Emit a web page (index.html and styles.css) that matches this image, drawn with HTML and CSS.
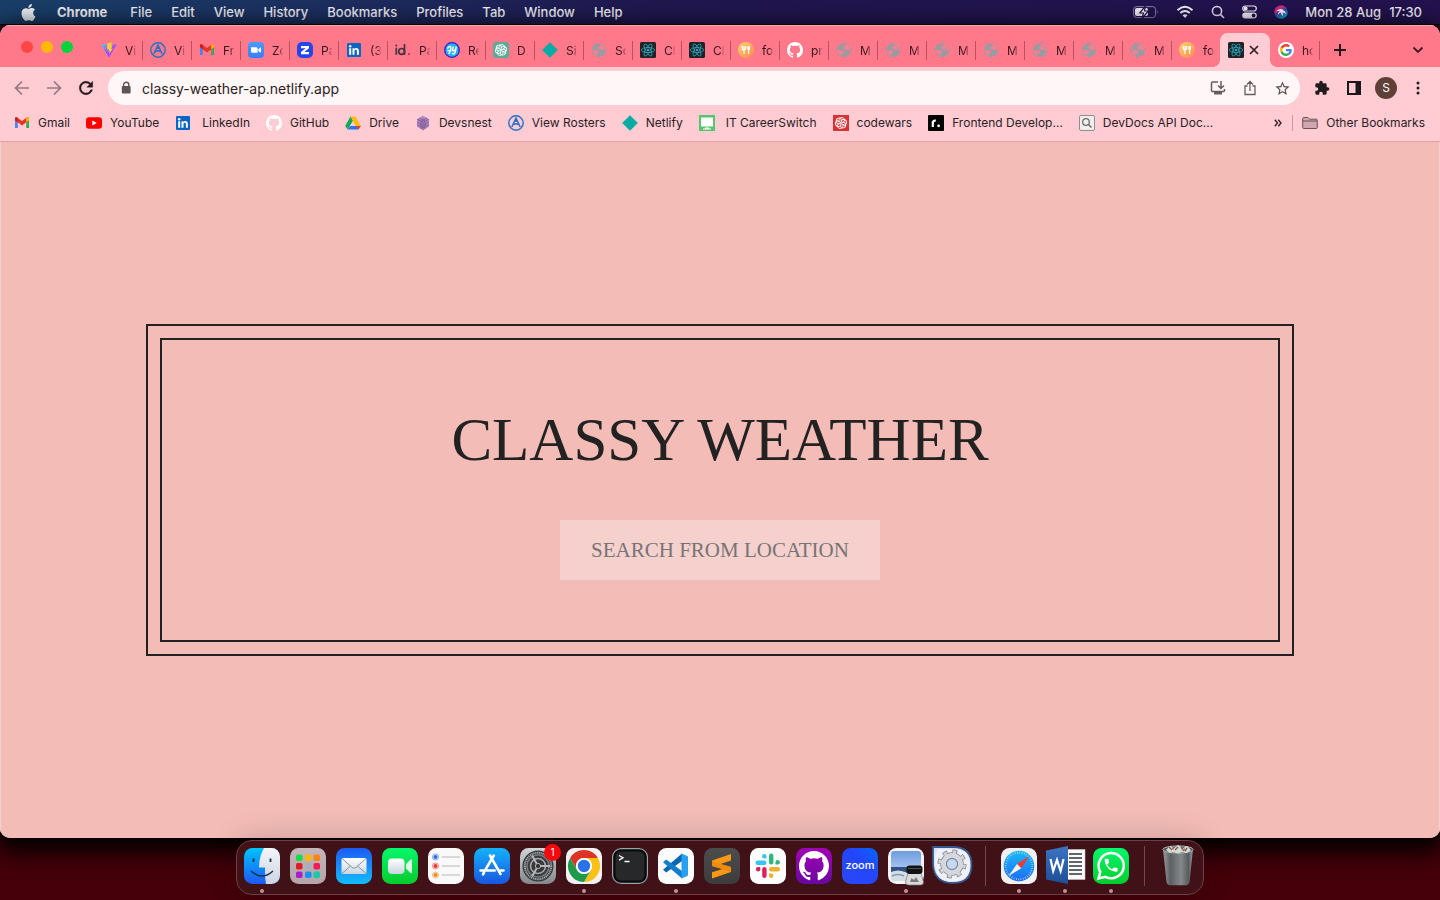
FILE: index.html
```html
<!DOCTYPE html>
<html lang="en">
<head>
<meta charset="utf-8">
<meta name="viewport" content="width=device-width, initial-scale=1">
<title>Classy Weather</title>
<link rel="stylesheet" href="styles.css">
</head>
<body>
<svg class="sprite" aria-hidden="true">
  <defs>
    <linearGradient id="g-vite" x1="0" y1="0" x2="1" y2="1"><stop offset="0" stop-color="#41d1ff"/><stop offset=".5" stop-color="#9a50ff"/><stop offset="1" stop-color="#bd34fe"/></linearGradient>
    <linearGradient id="g-food" x1="0" y1="0" x2="1" y2="1"><stop offset="0" stop-color="#fbd66a"/><stop offset="1" stop-color="#ff8652"/></linearGradient>
    <linearGradient id="g-zoomtab" x1="0" y1="0" x2="0" y2="1"><stop offset="0" stop-color="#4a9bff"/><stop offset="1" stop-color="#3a7dff"/></linearGradient>
    <linearGradient id="g-finder" x1="0" y1="0" x2="0" y2="1"><stop offset="0" stop-color="#00c3ff"/><stop offset="1" stop-color="#1e58f5"/></linearGradient>
    <linearGradient id="g-face" x1="0" y1="0" x2="0" y2="1"><stop offset="0" stop-color="#f5f5f8"/><stop offset="1" stop-color="#cbd5e2"/></linearGradient>
    <linearGradient id="g-pad" x1="0" y1="0" x2="0" y2="1"><stop offset="0" stop-color="#c3b5b9"/><stop offset="1" stop-color="#b5a5a9"/></linearGradient>
    <linearGradient id="g-mail" x1="0" y1="0" x2="0" y2="1"><stop offset="0" stop-color="#1e5bf2"/><stop offset="1" stop-color="#12bdfd"/></linearGradient>
    <linearGradient id="g-env" x1="0" y1="0" x2="0" y2="1"><stop offset="0" stop-color="#fff"/><stop offset="1" stop-color="#c9d4df"/></linearGradient>
    <linearGradient id="g-green" x1="0" y1="0" x2="0" y2="1"><stop offset="0" stop-color="#04f76c"/><stop offset="1" stop-color="#06cc2c"/></linearGradient>
    <linearGradient id="g-store" x1="0" y1="0" x2="0" y2="1"><stop offset="0" stop-color="#13b2fa"/><stop offset="1" stop-color="#1a56e0"/></linearGradient>
    <linearGradient id="g-sys" x1="0" y1="0" x2="0" y2="1"><stop offset="0" stop-color="#d2d5d8"/><stop offset="1" stop-color="#84878a"/></linearGradient>
    <linearGradient id="g-subl" x1="0" y1="0" x2="0" y2="1"><stop offset="0" stop-color="#4d4d4d"/><stop offset="1" stop-color="#3c3c3c"/></linearGradient>
    <linearGradient id="g-git" x1="0" y1="0" x2="0" y2="1"><stop offset="0" stop-color="#a104b5"/><stop offset="1" stop-color="#6a07a0"/></linearGradient>
    <linearGradient id="g-zoom" x1="1" y1="0" x2="0" y2="1"><stop offset="0" stop-color="#0568fa"/><stop offset=".4" stop-color="#2346fb"/><stop offset="1" stop-color="#2a48f5"/></linearGradient>
    <linearGradient id="g-sky" x1="0" y1="0" x2="0" y2="1"><stop offset="0" stop-color="#6f9be0"/><stop offset="1" stop-color="#b2cdf3"/></linearGradient>
    <linearGradient id="g-saf" x1="0" y1="0" x2="0" y2="1"><stop offset="0" stop-color="#1cb9fb"/><stop offset="1" stop-color="#1b6cf0"/></linearGradient>
    <linearGradient id="g-word" x1="0" y1="0" x2="0" y2="1"><stop offset="0" stop-color="#3c74c2"/><stop offset="1" stop-color="#1e4d97"/></linearGradient>
    <linearGradient id="g-trash" x1="0" y1="0" x2="1" y2="0"><stop offset="0" stop-color="#9a9d9f"/><stop offset=".25" stop-color="#5c6062"/><stop offset=".6" stop-color="#85898b"/><stop offset=".85" stop-color="#595c5e"/><stop offset="1" stop-color="#9c9fa1"/></linearGradient>
    <linearGradient id="g-siri" x1="0" y1="0" x2=".6" y2="1"><stop offset="0" stop-color="#a01c8c"/><stop offset=".35" stop-color="#d8287e"/><stop offset=".6" stop-color="#2b48a8"/><stop offset="1" stop-color="#12a5c8"/></linearGradient>
    <clipPath id="c-app"><rect width="36" height="36" rx="8.5"/></clipPath>
  </defs>
  <symbol id="vite" viewBox="0 0 16 16"><path d="M.2 2 8 15.800 15.800 2 8.400 3.400Z" fill="url(#g-vite)"/><path d="M11.300.2 6.400 1.200 6 7.400l2-.4-.6 2.800 1.600-.5-1.200 3.500 4-6.300-1.900.3 1.900-3.500-1.900.3Z" fill="#ffd02a"/></symbol>
  <symbol id="roster" viewBox="0 0 16 16"><circle cx="8" cy="8" r="7.200" fill="none" stroke="#2870c6" stroke-width="1.400"/><path d="M3.800 12 8 3l4.200 9M5.600 9.800c1.600-1.400 3.300-1.400 4.900 0M8 3v4" fill="none" stroke="#2870c6" stroke-width="1.500"/></symbol>
  <symbol id="gmail" viewBox="0 0 16 16"><path d="M1 3v10h2.800V6Z" fill="#4285f4"/><path d="M12.200 6v7H15V3Z" fill="#34a853"/><path d="M1 3.800C1 2.200 2.600 2 3.600 2.700L8 6l4.400-3.300C13.400 2 15 2.200 15 3.800v1.400L8 10.500 1 5.200Z" fill="#ea3325"/><path d="M1 3.800v1.400l2.800 2.100V2.900C2.600 2 1 2.200 1 3.800Z" fill="#c5221f"/><path d="M15 3.800v1.400l-2.800 2.100V2.900C13.400 2 15 2.200 15 3.800Z" fill="#fbbc04"/></symbol>
  <symbol id="zoomtab" viewBox="0 0 16 16"><rect width="16" height="16" rx="4" fill="url(#g-zoomtab)"/><path d="M3 5.300h5.200q1.500 0 1.500 1.500v4H4.500Q3 10.800 3 9.300ZM10.300 7.200 13 5.300v5.500L10.300 9Z" fill="#fff"/></symbol>
  <symbol id="zdoc" viewBox="0 0 16 16"><rect width="16" height="16" rx="5" fill="#2445ea"/><path d="M4 4h8v2.200L7.300 10H12v2.200H4V10l4.700-3.800H4Z" fill="#fff"/></symbol>
  <symbol id="linkedin" viewBox="0 0 16 16"><rect x="1" y="1" width="14" height="14" rx="1" fill="#0a66c2"/><path d="M3.200 6.200h2v6.500h-2ZM6.500 6.200h1.900v1c.9-1.700 4.500-1.600 4.500 1.600v3.900h-2V9.300c0-2-2.400-1.900-2.400 0v3.400h-2Z" fill="#fff"/><circle cx="4.200" cy="4.200" r="1.200" fill="#fff"/></symbol>
  <symbol id="idot" viewBox="0 0 16 16"><path d="M1.300 5.800v7M9.500 2v10.800" stroke="#46333d" stroke-width="1.700"/><circle cx="1.300" cy="3.400" r="1" fill="#46333d"/><circle cx="6.600" cy="9.400" r="2.900" fill="none" stroke="#46333d" stroke-width="1.700"/><circle cx="14" cy="12" r="1.100" fill="#e3126c"/></symbol>
  <symbol id="replay" viewBox="0 0 16 16"><circle cx="8" cy="8" r="7.300" fill="#20b7ea" stroke="#4011d9" stroke-width="1.300"/><path d="M3.300 6.500q2.500-3 3.400-1.500T4.800 12M3.500 8.500h4M9.300 4.500 8.500 8.300q1.200 1.500 3-.8l.8-2.800-1.300 6q-1.200 2-3 .6" fill="none" stroke="#fff" stroke-width="1.400"/></symbol>
  <symbol id="knot" viewBox="0 0 16 16"><g fill="none" stroke="#fff" stroke-width=".9"><path id="petal" d="M6 7V4.400Q7.500 1.700 10.200 2.700q2 1.300 1.400 3.500L8.400 8"/><use href="#petal" transform="rotate(60 8 8)"/><use href="#petal" transform="rotate(120 8 8)"/><use href="#petal" transform="rotate(180 8 8)"/><use href="#petal" transform="rotate(240 8 8)"/><use href="#petal" transform="rotate(300 8 8)"/></g></symbol>
  <symbol id="gpt" viewBox="0 0 16 16"><rect width="16" height="16" rx="3" fill="#5bab98"/><use href="#knot"/></symbol>
  <symbol id="codewars" viewBox="0 0 16 16"><rect width="16" height="16" fill="#d93236"/><use href="#knot"/></symbol>
  <symbol id="netlify" viewBox="0 0 16 16"><path d="M8 .2 15.800 8 8 15.800.2 8Z" fill="#05aba5"/></symbol>
  <symbol id="globe" viewBox="0 0 16 16"><circle cx="8" cy="8" r="7.100" fill="#9a9ba2"/><path d="M10.500 2.300Q8 3 8.700 4.800q-2.200-.3-2.200 1.700 2.200-.5 3 1.300 1.700-.7 4 .7l.7-.7q0-3.800-3.700-5.500ZM2 7.500q1.500 1.300 4 .8 2 .7 2.400 1.900-1.500.3-1.800 1.600-.4 1.700-1.100 1.800Q1.900 11.800 2 7.500Z" fill="#f97f90"/></symbol>
  <symbol id="react" viewBox="0 0 16 16"><rect width="16" height="16" rx="1.500" fill="#202228"/><g fill="none" stroke="#2ca9bd" stroke-width=".8"><ellipse cx="8" cy="8" rx="6.700" ry="2.500"/><ellipse cx="8" cy="8" rx="6.700" ry="2.500" transform="rotate(60 8 8)"/><ellipse cx="8" cy="8" rx="6.700" ry="2.500" transform="rotate(120 8 8)"/></g><circle cx="8" cy="8" r="1.300" fill="#2ca9bd"/></symbol>
  <symbol id="food" viewBox="0 0 16 16"><circle cx="8" cy="8" r="8" fill="url(#g-food)"/><path d="M4.300 4v2q0 2 1.700 2t1.700-2V4M6 4v8M10.600 4v8" fill="none" stroke="#fff" stroke-width="1.200"/><rect x="9.300" y="4" width="2.700" height="4" rx="1" fill="#fff"/></symbol>
  <symbol id="octocat" viewBox="0 0 16 16"><path d="M8 0C3.580 0 0 3.580 0 8c0 3.540 2.290 6.530 5.470 7.590.4.070.55-.17.55-.38 0-.19-.01-.82-.01-1.490-2.010.37-2.530-.49-2.690-.94-.09-.23-.48-.94-.82-1.130-.28-.15-.68-.52-.01-.53.63-.01 1.080.58 1.230.82.72 1.210 1.870.87 2.330.66.070-.52.28-.87.51-1.070-1.780-.2-3.640-.89-3.640-3.950 0-.87.31-1.590.82-2.150-.08-.2-.36-1.020.08-2.120 0 0 .67-.21 2.200.82.64-.18 1.320-.27 2-.27s1.360.09 2 .27c1.530-1.040 2.200-.82 2.200-.82.44 1.100.16 1.920.08 2.120.51.56.82 1.270.82 2.150 0 3.070-1.870 3.750-3.650 3.950.29.25.54.73.54 1.480 0 1.070-.01 1.930-.01 2.200 0 .21.15.46.55.38A8.010 8.010 0 0 0 16 8c0-4.420-3.580-8-8-8z" fill="#fff"/></symbol>
  <symbol id="google" viewBox="0 0 16 16"><circle cx="8" cy="8" r="8" fill="#fff"/><g transform="translate(2 2) scale(.25)"><path fill="#ea4335" d="M24 9.500c3.540 0 6.710 1.220 9.210 3.600l6.850-6.850C35.900 2.380 30.470 0 24 0 14.620 0 6.510 5.380 2.560 13.220l7.980 6.190C12.430 13.720 17.740 9.500 24 9.500z"/><path fill="#4285f4" d="M46.980 24.550c0-1.570-.15-3.090-.38-4.550H24v9.020h12.940c-.58 2.960-2.260 5.480-4.780 7.180l7.730 6c4.510-4.180 7.090-10.360 7.090-17.650z"/><path fill="#fbbc05" d="M10.530 28.590c-.48-1.450-.76-2.990-.76-4.590s.27-3.140.76-4.590l-7.980-6.190C.92 16.460 0 20.120 0 24c0 3.880.92 7.540 2.560 10.780l7.970-6.190z"/><path fill="#34a853" d="M24 48c6.480 0 11.930-2.130 15.890-5.810l-7.730-6c-2.150 1.450-4.920 2.300-8.160 2.300-6.260 0-11.570-4.220-13.470-9.910l-7.980 6.190C6.510 42.620 14.620 48 24 48z"/></g></symbol>
  <symbol id="youtube" viewBox="0 0 16 16"><rect y="2.300" width="16" height="11.400" rx="3" fill="#f00"/><path d="m6.300 5.500 4.500 2.500-4.500 2.500Z" fill="#fff"/></symbol>
  <symbol id="drive" viewBox="0 0 16 16"><path d="M5.500 1.500 1 9.500l-.8 1.600 2.500 3.500L8 5.600Z" fill="#0fa958"/><path d="M5.500 1.500h5L15.800 11h-5Z" fill="#fdbb0b"/><path d="M2.700 14.600 5.200 11h10.600l-2.500 3.600Z" fill="#2f73f5"/><path d="m15.800 11-2.500 3.600L10.800 11Z" fill="#e43d30"/></symbol>
  <symbol id="cube" viewBox="0 0 16 16"><path d="m8 .8 6 3.400v7.600l-6 3.400-6-3.400V4.200Z" fill="#b088c2"/><path d="M8 7.300v7.900M2 4.200l6 3.100 6-3.100M4 3l6 3v8M12 3 6 6v8M2 7l6 3.200L14 7M2 9.500l6 3.200 6-3.200" fill="none" stroke="#7b5089" stroke-width=".7"/></symbol>
  <symbol id="monitor" viewBox="0 0 16 16"><rect width="16" height="16" fill="#55c66b"/><path d="M2 2.500h12v9H2ZM6 12.500h4v1H6ZM4 13.500h8v1H4Z" fill="#fff"/></symbol>
  <symbol id="roadmap" viewBox="0 0 16 16"><rect width="16" height="16" rx="1" fill="#000"/><path d="M4.800 12V6.300M4.800 8q0-2.700 3-2.300" fill="none" stroke="#fff" stroke-width="2.200"/><circle cx="10.600" cy="10.800" r="1.400" fill="#fff"/></symbol>
  <symbol id="devdocs" viewBox="0 0 16 16"><rect x=".5" y=".5" width="15" height="15" rx="1.500" fill="#f1eeee" stroke="#918c8e"/><circle cx="7" cy="7" r="3.300" fill="none" stroke="#706b6e" stroke-width="1.300"/><path d="m9.500 9.500 3 3" stroke="#706b6e" stroke-width="1.500"/></symbol>
  <symbol id="folder" viewBox="0 0 16 16"><path d="M.7 3.500q0-1 1-1H6l1.500 1.700h6.800q1 0 1 1v7.300q0 1-1 1H1.700q-1 0-1-1ZM.7 6h14.600" fill="#cfa7ad" stroke="#6a5357"/></symbol>
</svg>

<header class="menubar">
  <nav class="menus" aria-label="Menu bar">
    <button class="menu menu-apple" aria-label="Apple"><svg width="17" height="17" viewBox="0 0 24 24"><path fill="#e9edf3" d="M12.152 6.896c-.948 0-2.415-1.078-3.960-1.040-2.040.027-3.910 1.183-4.961 3.014-2.117 3.675-.546 9.103 1.519 12.090 1.013 1.454 2.208 3.090 3.792 3.039 1.520-.065 2.090-.987 3.935-.987 1.831 0 2.350.987 3.960.948 1.637-.026 2.676-1.480 3.676-2.948 1.156-1.688 1.636-3.325 1.662-3.415-.039-.013-3.182-1.221-3.220-4.857-.026-3.040 2.480-4.494 2.597-4.559-1.429-2.090-3.623-2.324-4.390-2.376-2-.156-3.675 1.090-4.610 1.090zM15.530 3.830c.843-1.012 1.400-2.427 1.245-3.830-1.207.052-2.662.805-3.532 1.818-.78.896-1.454 2.338-1.273 3.714 1.338.104 2.715-.688 3.559-1.701"/></svg></button>
    <button class="menu menu-app">Chrome</button>
    <button class="menu">File</button>
    <button class="menu">Edit</button>
    <button class="menu">View</button>
    <button class="menu">History</button>
    <button class="menu">Bookmarks</button>
    <button class="menu">Profiles</button>
    <button class="menu">Tab</button>
    <button class="menu">Window</button>
    <button class="menu">Help</button>
  </nav>
  <div class="status">
    <svg width="26" height="14" viewBox="0 0 26 14"><rect x=".6" y="1.600" width="22" height="11" rx="3" fill="none" stroke="#8b84a8"/><path d="M24 5q1.500 2 0 4Z" fill="#8b84a8"/><rect x="2" y="3" width="13" height="8" rx="1.800" fill="#efedf5"/><path d="M12.500 1 6.800 8h3.700l-1.500 5.500L15.300 6h-3.800Z" fill="#fff" stroke="#22154d" stroke-width="1.200"/></svg>
    <svg width="18" height="14" viewBox="0 0 18 14"><g fill="none" stroke="#f2f0f7" stroke-width="2"><path d="M1.500 5.200q7.500-6.800 15 0"/><path d="M4.300 8.100q4.700-4.200 9.400 0"/></g><path d="M9 13 6.500 10.300q2.500-2 5 0Z" fill="#f2f0f7"/></svg>
    <svg width="14" height="14" viewBox="0 0 14 14"><circle cx="6" cy="6" r="4.600" fill="none" stroke="#e7e4ef" stroke-width="1.500"/><path d="m9.400 9.400 3.600 3.600" stroke="#e7e4ef" stroke-width="1.700"/></svg>
    <svg width="15" height="14" viewBox="0 0 15 14"><rect x=".7" y="1" width="13.600" height="5" rx="2.500" fill="none" stroke="#eeebf4" stroke-width="1.200"/><circle cx="3.600" cy="3.500" r="2" fill="#eeebf4"/><rect x=".2" y="7.500" width="14.600" height="6" rx="3" fill="#eeebf4"/><circle cx="11.600" cy="10.500" r="1.900" fill="#22154d"/></svg>
    <svg width="14" height="14" viewBox="0 0 14 14"><circle cx="7" cy="7" r="6.800" fill="url(#g-siri)"/><path d="M2 6.500Q5 3.500 8 4.200q3 1 4.500 4.800-2.500-1.500-4-1.500.8 2 .5 3.500Q7 9.500 6.700 7.500 5 8 3.500 10.500 4 7 6 5.800 4 5.800 2 6.500Z" fill="#fbeefb"/></svg>
    <time class="clock"><span>Mon 28 Aug</span><span>17:30</span></time>
  </div>
</header>

<div class="window">
  <div class="tabstrip">
    <div class="lights">
      <button class="light light-close" aria-label="Close"></button>
      <button class="light light-min" aria-label="Minimise"></button>
      <button class="light light-max" aria-label="Zoom"></button>
    </div>
    <div class="tabs">
      <button class="tab"><svg class="fav"><use href="#vite"/></svg><span>Vi</span></button>
      <button class="tab"><svg class="fav"><use href="#roster"/></svg><span>Vi</span></button>
      <button class="tab"><svg class="fav"><use href="#gmail"/></svg><span>Fr</span></button>
      <button class="tab"><svg class="fav"><use href="#zoomtab"/></svg><span>Zo</span></button>
      <button class="tab"><svg class="fav"><use href="#zdoc"/></svg><span>Pa</span></button>
      <button class="tab"><svg class="fav"><use href="#linkedin"/></svg><span>(3</span></button>
      <button class="tab"><svg class="fav"><use href="#idot"/></svg><span>Pa</span></button>
      <button class="tab"><svg class="fav"><use href="#replay"/></svg><span>Re</span></button>
      <button class="tab"><svg class="fav"><use href="#gpt"/></svg><span>D</span></button>
      <button class="tab"><svg class="fav"><use href="#netlify"/></svg><span>Si</span></button>
      <button class="tab"><svg class="fav"><use href="#globe"/></svg><span>Sc</span></button>
      <button class="tab"><svg class="fav"><use href="#react"/></svg><span>Cl</span></button>
      <button class="tab"><svg class="fav"><use href="#react"/></svg><span>Cl</span></button>
      <button class="tab"><svg class="fav"><use href="#food"/></svg><span>fo</span></button>
      <button class="tab"><svg class="fav"><use href="#octocat"/></svg><span>pr</span></button>
      <button class="tab"><svg class="fav"><use href="#globe"/></svg><span>M</span></button>
      <button class="tab"><svg class="fav"><use href="#globe"/></svg><span>M</span></button>
      <button class="tab"><svg class="fav"><use href="#globe"/></svg><span>M</span></button>
      <button class="tab"><svg class="fav"><use href="#globe"/></svg><span>M</span></button>
      <button class="tab"><svg class="fav"><use href="#globe"/></svg><span>M</span></button>
      <button class="tab"><svg class="fav"><use href="#globe"/></svg><span>M</span></button>
      <button class="tab"><svg class="fav"><use href="#globe"/></svg><span>M</span></button>
      <button class="tab tab-before"><svg class="fav"><use href="#food"/></svg><span>fo</span></button>
      <button class="tab tab-active" aria-label="Classy Weather"><svg class="fav"><use href="#react"/></svg><svg width="10" height="10" viewBox="0 0 10 10"><path d="m1 1 8 8M9 1 1 9" stroke="#2a2022" stroke-width="1.700"/></svg></button>
      <button class="tab"><svg class="fav"><use href="#google"/></svg><span>ho</span></button>
    </div>
    <button class="icon-button new-tab" aria-label="New tab"><svg width="14" height="14" viewBox="0 0 14 14"><path d="M7 1v12M1 7h12" stroke="#2a1519" stroke-width="2"/></svg></button>
    <button class="icon-button tab-search" aria-label="Search tabs"><svg width="12" height="8" viewBox="0 0 12 8"><path d="m1.500 1.500 4.500 4.500 4.500-4.500" fill="none" stroke="#42171f" stroke-width="1.800"/></svg></button>
  </div>

  <div class="toolbar">
    <button class="icon-button" aria-label="Back"><svg width="16" height="16" viewBox="0 0 16 16"><path d="M15 8H2M8 1.500 1.500 8 8 14.500" fill="none" stroke="#957a80" stroke-width="1.700"/></svg></button>
    <button class="icon-button" aria-label="Forward"><svg width="16" height="16" viewBox="0 0 16 16"><path d="M1 8h13M8 1.500 14.500 8 8 14.500" fill="none" stroke="#957a80" stroke-width="1.700"/></svg></button>
    <button class="icon-button" aria-label="Reload"><svg width="20" height="20" viewBox="0 0 24 24"><path fill="#26191c" stroke="#26191c" stroke-width=".5" d="M17.650 6.350C16.200 4.900 14.210 4 12 4c-4.420 0-7.990 3.580-7.990 8s3.570 8 7.990 8c3.730 0 6.840-2.550 7.730-6h-2.080c-.82 2.330-3.040 4-5.650 4-3.310 0-6-2.690-6-6s2.690-6 6-6c1.660 0 3.140.69 4.220 1.780L13 11h7V4l-2.350 2.350z"/></svg></button>
    <div class="omnibox">
      <svg width="10" height="14" viewBox="0 0 10 14"><rect x=".8" y="5" width="8.800" height="7.500" rx="1" fill="#5c5558"/><path d="M2.600 5.500V3.800a2.600 2.600 0 0 1 5.200 0v1.700" fill="none" stroke="#5c5558" stroke-width="1.400"/></svg>
      <input class="address" type="text" aria-label="Address" value="classy-weather-ap.netlify.app">
      <button class="icon-button" aria-label="Install"><svg width="16" height="16" viewBox="0 0 16 16"><path d="M8 2H2.500q-1 0-1 1v7.500q0 1 1 1h11q1 0 1-1V9M11 1v7M8 5.500l3 3 3-3" fill="none" stroke="#655d60" stroke-width="1.500"/><path d="M4 12h8v2.500H4Z" fill="#655d60"/></svg></button>
      <button class="icon-button" aria-label="Share"><svg width="14" height="16" viewBox="0 0 14 16"><path d="M4.500 6H2v8.500h10V6H9.500M7 11V2M4 4.500l3-3 3 3" fill="none" stroke="#655d60" stroke-width="1.300"/></svg></button>
      <button class="icon-button" aria-label="Bookmark"><svg width="17" height="17" viewBox="0 0 24 24"><path fill="#554e51" d="M22 9.240l-7.190-.62L12 2 9.190 8.630 2 9.240l5.460 4.730L5.820 21 12 17.270 18.180 21l-1.630-7.030L22 9.240zM12 15.400l-3.760 2.270 1-4.280-3.320-2.880 4.380-.38L12 6.100l1.710 4.040 4.380.38-3.320 2.880 1 4.280L12 15.400z"/></svg></button>
    </div>
    <button class="icon-button" aria-label="Extensions"><svg width="16" height="16" viewBox="0 0 24 24"><path fill="#221a1c" d="M20.500 11H19V7c0-1.100-.9-2-2-2h-4V3.500C13 2.120 11.880 1 10.500 1S8 2.120 8 3.500V5H4c-1.100 0-1.990.9-1.990 2v3.800H3.500c1.490 0 2.700 1.210 2.700 2.700s-1.210 2.700-2.700 2.700H2V20c0 1.100.9 2 2 2h3.800v-1.500c0-1.490 1.210-2.700 2.700-2.700 1.490 0 2.700 1.210 2.700 2.700V22H17c1.100 0 2-.9 2-2v-4h1.500c1.380 0 2.500-1.120 2.500-2.500S21.880 11 20.500 11z"/></svg></button>
    <button class="icon-button" aria-label="Side panel"><svg width="14" height="14" viewBox="0 0 14 14"><path d="M1 1h12v12H1Z" fill="none" stroke="#1d1719" stroke-width="2"/><path d="M8.500 1H13v12H8.500Z" fill="#1d1719"/></svg></button>
    <button class="icon-button" aria-label="Profile"><span class="avatar">S</span></button>
    <button class="icon-button" aria-label="Menu"><svg width="4" height="14" viewBox="0 0 4 14" fill="#241b1d"><circle cx="2" cy="2" r="1.500"/><circle cx="2" cy="7" r="1.500"/><circle cx="2" cy="12" r="1.500"/></svg></button>
  </div>

  <nav class="bookmarks" aria-label="Bookmarks">
    <div class="bookmark-list">
      <a class="bookmark" href="#"><svg class="fav"><use href="#gmail"/></svg>Gmail</a>
      <a class="bookmark" href="#"><svg class="fav"><use href="#youtube"/></svg>YouTube</a>
      <a class="bookmark bookmark-wide" href="#"><svg class="fav"><use href="#linkedin"/></svg>LinkedIn</a>
      <a class="bookmark" href="#"><svg class="fav"><use href="#octocat"/></svg>GitHub</a>
      <a class="bookmark" href="#"><svg class="fav"><use href="#drive"/></svg>Drive</a>
      <a class="bookmark" href="#"><svg class="fav"><use href="#cube"/></svg>Devsnest</a>
      <a class="bookmark" href="#"><svg class="fav"><use href="#roster"/></svg>View Rosters</a>
      <a class="bookmark" href="#"><svg class="fav"><use href="#netlify"/></svg>Netlify</a>
      <a class="bookmark bookmark-wide" href="#"><svg class="fav"><use href="#monitor"/></svg>IT CareerSwitch</a>
      <a class="bookmark" href="#"><svg class="fav"><use href="#codewars"/></svg>codewars</a>
      <a class="bookmark" href="#"><svg class="fav"><use href="#roadmap"/></svg>Frontend Develop...</a>
      <a class="bookmark" href="#"><svg class="fav"><use href="#devdocs"/></svg>DevDocs API Doc...</a>
    </div>
    <button class="overflow" aria-label="More bookmarks"><svg width="8" height="8" viewBox="0 0 8 8"><path d="m.8.8 2.700 3.200L.8 7.200M4.300.8 7 4 4.300 7.200" fill="none" stroke="#30262a" stroke-width="1.400"/></svg></button>
    <a class="bookmark bookmark-other" href="#"><svg class="fav"><use href="#folder"/></svg>Other Bookmarks</a>
  </nav>

  <main class="page">
    <section class="frame">
      <div class="card">
        <h1 class="title">Classy Weather</h1>
        <input class="search" type="text" aria-label="Search from location" placeholder="Search from location">
      </div>
    </section>
  </main>
</div>

<footer class="dock-area">
  <div class="dock">
    <button class="app running" aria-label="Finder"><svg viewBox="0 0 36 36"><g clip-path="url(#c-app)"><path d="M0 0h36v36H0Z" fill="url(#g-finder)"/><path d="M20 0q-5 9-5 19.500h6Q20.500 28 22 36h14V0Z" fill="url(#g-face)"/></g><path d="M9.500 10.500v3.500M26.500 10.500v3.500" stroke="#17324a" stroke-width="1.800"/><path d="M7 23q11 10 22 0" fill="none" stroke="#17324a" stroke-width="1.400"/></svg></button>
    <button class="app" aria-label="Launchpad"><svg viewBox="0 0 36 36"><rect width="36" height="36" rx="8.500" fill="url(#g-pad)"/><rect x="6" y="6.500" width="6.500" height="6.500" rx="1.700" fill="#17dd4a"/><rect x="15" y="6.500" width="6.500" height="6.500" rx="1.700" fill="#fbb905"/><rect x="23.500" y="6.500" width="6.500" height="6.500" rx="1.700" fill="#f98510"/><rect x="6" y="15" width="6.500" height="6.500" rx="1.700" fill="#e01b26"/><rect x="15" y="15" width="6.500" height="6.500" rx="1.700" fill="#a8b1ba"/><rect x="23.500" y="15" width="6.500" height="6.500" rx="1.700" fill="#f5195c"/><rect x="6" y="23.500" width="6.500" height="6.500" rx="1.700" fill="#a51ed0"/><rect x="15" y="23.500" width="6.500" height="6.500" rx="1.700" fill="#1b91f5"/><rect x="23.500" y="23.500" width="6.500" height="6.500" rx="1.700" fill="#1ac9a6"/></svg></button>
    <button class="app" aria-label="Mail"><svg viewBox="0 0 36 36"><rect width="36" height="36" rx="8.500" fill="url(#g-mail)"/><rect x="5.500" y="10" width="25" height="16" rx="1.500" fill="url(#g-env)"/><path d="m6 10.500 10 9q2 1.500 4 0l10-9M6 25.500l8.500-7.500M30 25.500 21.500 18" fill="none" stroke="#8796a5" stroke-width="1"/></svg></button>
    <button class="app" aria-label="FaceTime"><svg viewBox="0 0 36 36"><rect width="36" height="36" rx="8.500" fill="url(#g-green)"/><rect x="6" y="10.500" width="16.500" height="15.500" rx="4" fill="url(#g-env)"/><path d="m24 16 4.500-4.500Q30 10.500 30 12.500V24q0 2-1.500 1L24 20.500Z" fill="#dff7e4"/></svg></button>
    <button class="app" aria-label="Reminders"><svg viewBox="0 0 36 36"><rect width="36" height="36" rx="8.500" fill="#faf9f9"/><path d="M14 9h18M14 18h18M14 27h18" stroke="#cfccce" stroke-width="1.300"/><g fill="none" stroke-width="1" opacity=".6"><circle cx="7.500" cy="9" r="3" stroke="#2a6fe0"/><circle cx="7.500" cy="18" r="3" stroke="#e8382f"/><circle cx="7.500" cy="27" r="3" stroke="#f08b1f"/></g><circle cx="7.500" cy="9" r="2" fill="#2a6fe0"/><circle cx="7.500" cy="18" r="2" fill="#e8382f"/><circle cx="7.500" cy="27" r="2" fill="#f08b1f"/></svg></button>
    <button class="app" aria-label="App Store"><svg viewBox="0 0 36 36"><rect width="36" height="36" rx="8.500" fill="url(#g-store)"/><path d="m19.800 7.500-8.300 14.200M16 7.500 26.500 26M6.500 22.500h14.200M24.500 22.500h5M10 24.500l-1 1.800" fill="none" stroke="#fff" stroke-width="2.600" stroke-linecap="round"/></svg></button>
    <button class="app" aria-label="System Preferences, 1 notification"><svg viewBox="0 0 36 36"><rect width="36" height="36" rx="8.500" fill="url(#g-sys)"/><circle cx="18" cy="18" r="15.500" fill="#37393b"/><circle cx="18" cy="18" r="13.200" fill="none" stroke="#a7aaad" stroke-width="2" stroke-dasharray="1.200 .7"/><circle cx="18" cy="18" r="11" fill="none" stroke="#77797b" stroke-width="1.500"/><circle cx="18" cy="18" r="7.500" fill="none" stroke="#a7aaad" stroke-width="1.600"/><path d="M18 18h12M18 18 12 7.600M18 18l-6 10.400" stroke="#b5b7b9" stroke-width="2"/><circle cx="18" cy="18" r="2.600" fill="#303234" stroke="#b5b7b9"/></svg><span class="badge">1</span></button>
    <button class="app running" aria-label="Chrome"><svg viewBox="0 0 36 36"><rect width="36" height="36" rx="8.500" fill="#f3f1f1"/><path d="M4.140 10A16 16 0 0 1 31.860 10H18A8 8 0 0 0 11.070 22Z" fill="#df3327"/><path d="M31.860 10A16 16 0 0 1 18 34L24.930 22A8 8 0 0 0 18 10Z" fill="#fbc116"/><path d="M18 34A16 16 0 0 1 4.140 10L11.070 22A8 8 0 0 0 24.930 22Z" fill="#1d9b4b"/><circle cx="18" cy="18" r="8" fill="#fff"/><circle cx="18" cy="18" r="6.200" fill="#2a72ea"/></svg></button>
    <button class="app" aria-label="Terminal"><svg viewBox="0 0 36 36"><rect x=".6" y=".6" width="34.800" height="34.800" rx="8.500" fill="#08090a" stroke="#9aa3a6" stroke-width="1.200"/><rect x="3.500" y="3.500" width="29" height="29" rx="5.500" fill="#272829"/><path d="m7 7.500 4 2.300-4 2.300M12.500 13.500h5" fill="none" stroke="#fff" stroke-width="1.300"/></svg></button>
    <button class="app running" aria-label="Visual Studio Code"><svg viewBox="0 0 36 36"><rect width="36" height="36" rx="8.500" fill="#fbfbfb"/><path d="M24 5.500V13L8.200 24.500 5 21.800Z" fill="#0a66b0"/><path d="M24 30.500V23L8.200 11.500 5 14.200Z" fill="#127ecb"/><path d="M23.500 5.500 29.300 8q.7.400.7 1.200v17.600q0 .8-.7 1.200L23.500 30.500Z" fill="#27a0ef"/></svg></button>
    <button class="app" aria-label="Sublime Text"><svg viewBox="0 0 36 36"><rect width="36" height="36" rx="8.500" fill="url(#g-subl)"/><path d="M8 12.500 27 6v6.500L16.500 16 27 19v5L8 30.500v-6.300L18.500 21 8 18Z" fill="#fb9712"/><path d="M8 13v5l10.500 3 8.500 3v-5l-10.500-3Z" fill="#f08a0c"/></svg></button>
    <button class="app" aria-label="Slack"><svg viewBox="0 0 36 36"><rect width="36" height="36" rx="8.500" fill="#fefefe"/><g fill="#36c5f0"><rect x="5.500" y="12.500" width="11" height="4.400" rx="2.200"/><path d="M16.500 10.500h-2.200a2.200 2.200 0 1 1 2.200-2.200Z"/></g><g fill="#2eb67d"><rect x="19" y="5.500" width="4.400" height="11" rx="2.200"/><path d="M25.500 16.500v-2.200a2.200 2.200 0 1 1 2.200 2.200Z"/></g><g fill="#ecb22e"><rect x="19" y="19" width="11" height="4.400" rx="2.200"/><path d="M19 25.500h2.200a2.200 2.200 0 1 1-2.200 2.200Z"/></g><g fill="#e01e5a"><rect x="12.200" y="19" width="4.400" height="11" rx="2.200"/><path d="M10.300 19v2.200A2.200 2.200 0 1 1 8 19Z"/></g></svg></button>
    <button class="app" aria-label="GitHub Desktop"><svg viewBox="0 0 36 36"><rect width="36" height="36" rx="8.500" fill="url(#g-git)"/><use href="#octocat" x="3" y="3" width="30" height="30"/></svg></button>
    <button class="app" aria-label="Zoom"><svg viewBox="0 0 36 36"><rect width="36" height="36" rx="8.500" fill="url(#g-zoom)"/></svg><span class="wordmark">zoom</span></button>
    <button class="app running" aria-label="Preview"><svg viewBox="0 0 36 36"><rect width="36" height="36" rx="8.500" fill="#f5f4f4"/><path d="M3 6q0-3 3-3h24q3 0 3 3v18H3Z" fill="url(#g-sky)"/><path d="M3 19h30v7H3Z" fill="#315083"/><path d="M3 24q7-3 14 0t16 0v7q0 2-2 2H5q-2 0-2-2Z" fill="#d4dde3"/><path d="M4 28q6-3 12 0" fill="none" stroke="#7e97ab" stroke-width="1.500"/><path d="M20 25h13l2.500 9q0 3-3 3h-12q-3 0-3-3Z" fill="#dadada" stroke="#77787a" stroke-width=".7"/><rect x="18.500" y="17.500" width="16" height="8.500" rx="3" fill="#111214"/><path d="M20 20.500h13" stroke="#505256"/><path d="m22 34 1.500-4 2.500 2 2-3 3 5Z" fill="#777a7d"/></svg></button>
    <button class="app" aria-label="System Information"><svg viewBox="0 0 36 36"><path d="M-1-1h20Q37.500-1 37.500 17T19 35-1 17Z" fill="#d8e3f7" stroke="#35578d" stroke-width="1.800"/><path d="M4 1h15Q36 1 36 17T19 33.500 1 17V8Z" fill="#eef1f6"/><circle cx="18" cy="16" r="12.500" fill="none" stroke="#86868f" stroke-width="4" stroke-dasharray="4.800 5.017"/><circle cx="18" cy="16" r="8.500" fill="none" stroke="#84858e" stroke-width="6.500"/><circle cx="18" cy="16" r="12" fill="none" stroke="#d2d2dc" stroke-width="3.500" stroke-dasharray="3.400 6.025" stroke-dashoffset="-.5"/><circle cx="18" cy="16" r="8.500" fill="none" stroke="#d6d6df" stroke-width="5"/><circle cx="18" cy="16" r="5.500" fill="#c4d9f7" stroke="#787e8c"/></svg></button>
    <span class="divider"></span>
    <button class="app running" aria-label="Safari"><svg viewBox="0 0 36 36"><rect width="36" height="36" rx="8.500" fill="#f2f1f1"/><circle cx="18" cy="18" r="15.300" fill="url(#g-saf)"/><circle cx="18" cy="18" r="13.300" fill="none" stroke="#d8efff" stroke-width="1.800" stroke-dasharray=".6 1.721"/><path d="m28.500 8-8.300 12.200L16 16Z" fill="#f03a31"/><path d="M7.500 28 16 16l4.200 4.200Z" fill="#f2f4f6"/></svg></button>
    <button class="app running" aria-label="Word"><svg viewBox="1 1 36 36"><path d="M21 2.500h18v30H21Z" fill="#fafafa" stroke="#c5c5c5" stroke-width=".6"/><path d="M23 7h13M23 11h13M23 15h13M23 19h13M23 23h13M23 27h13" stroke="#30343b" stroke-width="1.500"/><path d="M0 3.500 22-1v38L0 32.500Z" fill="url(#g-word)"/><path d="m4.500 12 2.700 12 3.800-11 3.600 11 3-12" fill="none" stroke="#fff" stroke-width="2.200"/></svg></button>
    <button class="app running" aria-label="WhatsApp"><svg viewBox="0 0 36 36"><rect width="36" height="36" rx="8.500" fill="url(#g-green)"/><path d="m5.500 30.500 1.800-6.500a12.600 12.600 0 1 1 5 4.800Z" fill="none" stroke="#fff" stroke-width="2.500"/><path transform="translate(9.500 8.700) scale(.72)" d="M6.620 10.790c1.440 2.830 3.760 5.140 6.590 6.590l2.200-2.200c.27-.27.67-.36 1.020-.24 1.120.37 2.330.57 3.570.57.55 0 1 .45 1 1V20c0 .55-.45 1-1 1-9.390 0-17-7.610-17-17 0-.55.45-1 1-1h3.500c.55 0 1 .45 1 1 0 1.250.2 2.450.57 3.570.110.350.030.740-.25 1.020l-2.200 2.200z" fill="#fff"/></svg></button>
    <span class="divider"></span>
    <button class="app" aria-label="Trash"><svg viewBox="0 0 36 36"><path d="m3 1 3.500 33q.3 3 4 3.200h15q3.700-.2 4-3.200L33 1Z" fill="url(#g-trash)"/><ellipse cx="18" cy="1.500" rx="15.200" ry="3.600" fill="#4b4e50" stroke="#b1b4b6"/><path d="m6 2 4-4 4 2 4-3 5 3 4-2 4 4-4 3-5-1-4 1.500-5-1.500-3 1Z" fill="#d9d9d6"/><path d="m9-1 3 3M15 2l3-3M21-1l3 4M27 0l-2 3" stroke="#5c6a6d" stroke-width="1.400"/><path d="m12 0 2 1M23 2l2-1" stroke="#d96a35" stroke-width="1.500"/></svg></button>
  </div>
</footer>
</body>
</html>
```

FILE: styles.css
```css
* {
  box-sizing: border-box;
}

body {
  margin: 0;
  height: 100vh;
  display: flex;
  flex-direction: column;
  overflow: hidden;
  background: #450009;
  color: #2b2023;
  font-family: Inter, "Liberation Sans", sans-serif;
  font-size: 12px;
}

button,
input {
  margin: 0;
  padding: 0;
  border: 0;
  background: none;
  color: inherit;
  font: inherit;
}

svg {
  display: block;
  flex: none;
  overflow: visible;
}

.sprite {
  position: absolute;
  width: 0;
  height: 0;
}

/* Menu bar */
.menubar {
  flex: none;
  height: 25px;
  display: flex;
  justify-content: space-between;
  padding: 0 18px 0 20px;
  border-bottom: 1px solid #05030c;
  background: linear-gradient(90deg, #193f69 0%, #1c2f60 22%, #20174f 45%, #23124e 100%);
  color: #f0eff5;
  font-size: 13px;
  font-weight: 500;
}

.menus,
.status,
.clock {
  display: flex;
  align-items: center;
}

.menus {
  gap: 19px;
}

.status {
  gap: 17px;
}

.clock {
  gap: 8px;
}

.menu-apple {
  margin-right: 1px;
}

.menu-app {
  margin-right: 4px;
  font-weight: 700;
}

/* Browser window */
.window {
  flex: 1;
  min-height: 0;
  display: flex;
  flex-direction: column;
  border-radius: 10px;
  overflow: hidden;
  background: #ffccd3;
  box-shadow: 0 0 0 1px #000, 0 8px 24px 6px #000;
}

.tabstrip {
  flex: none;
  height: 42px;
  display: flex;
  align-items: flex-end;
  padding-left: 21px;
  padding-right: 6px;
  border-top: 1px solid #ffa3ae;
  background: #ff798b;
}

.lights {
  display: flex;
  gap: 8px;
  align-self: center;
  margin-right: 20px;
}

.light {
  width: 12px;
  height: 12px;
  border-radius: 50%;
}

.light-close {
  background: #ff4644;
}

.light-min {
  background: #ffb903;
}

.light-max {
  background: #05d33d;
}

.tabs {
  display: flex;
}

.tab {
  position: relative;
  width: 49px;
  height: 34px;
  display: flex;
  align-items: center;
  gap: 8px;
  padding: 0 5px 0 8px;
  color: #3a161e;
}

.tab::after {
  content: "";
  position: absolute;
  right: -1px;
  top: 8px;
  width: 1px;
  height: 19px;
  background: #b75261;
}

.tab span {
  width: 12px;
  overflow: hidden;
  white-space: nowrap;
  text-align: left;
  -webkit-mask-image: linear-gradient(90deg, #000 60%, transparent 95%);
  mask-image: linear-gradient(90deg, #000 60%, transparent 95%);
}

.tab-before::after {
  display: none;
}

.tab-active {
  width: 50px;
  gap: 5px;
  border-radius: 8px 8px 0 0;
  background: #ffccd3;
}

.tab-active::before,
.tab-active::after {
  content: "";
  position: absolute;
  top: auto;
  bottom: 0;
  width: 8px;
  height: 8px;
}

.tab-active::before {
  left: -8px;
  background: radial-gradient(circle at 0 0, transparent 8px, #ffccd3 8px);
}

.tab-active::after {
  right: -8px;
  background: radial-gradient(circle at 100% 0, transparent 8px, #ffccd3 8px);
}

.fav {
  width: 16px;
  height: 16px;
}

.icon-button {
  flex: none;
  width: 32px;
  height: 34px;
  display: flex;
  align-items: center;
  justify-content: center;
}

.new-tab {
  margin-left: 5px;
}

.tab-search {
  margin-left: auto;
}

.toolbar {
  flex: none;
  display: flex;
  align-items: center;
  padding: 4px 6px 0;
}

.omnibox {
  flex: 1;
  height: 34px;
  display: flex;
  align-items: center;
  margin: 0 6px;
  padding: 0 2px 0 13px;
  border-radius: 17px;
  background: #fff7f7;
}

.address {
  flex: 1;
  min-width: 0;
  height: 100%;
  padding-left: 11px;
  outline: 0;
  font-size: 14px;
}

.avatar {
  width: 22px;
  height: 22px;
  border-radius: 50%;
  background: #5e4037;
  color: #fff;
  line-height: 22px;
  text-align: center;
}

.bookmarks {
  flex: none;
  height: 37px;
  display: flex;
  align-items: center;
  padding: 0 15px 1px 14px;
  border-bottom: 1px solid #dda4aa;
}

.bookmark-list {
  flex: 1;
  display: flex;
  gap: 16px;
}

.bookmark {
  display: flex;
  align-items: center;
  gap: 8px;
  color: inherit;
  text-decoration: none;
  white-space: nowrap;
}

.bookmark-wide {
  gap: 11px;
}

.overflow {
  padding: 4px 10px;
}

.bookmark-other {
  padding-left: 9px;
  border-left: 1px solid #c99ba2;
}

/* Weather page */
.page {
  flex: 1;
  display: flex;
  align-items: center;
  padding: 0 145px;
  border-left: 1px solid #f7cfcb;
  border-right: 1px solid #f7cfcb;
  background: #f3bcb6;
  color: #222;
  font-family: "Liberation Serif", serif;
  text-transform: uppercase;
}

.frame {
  flex: 1;
  padding: 12px;
  border: 2px solid #222;
}

.card {
  display: flex;
  flex-direction: column;
  align-items: center;
  gap: 40px;
  padding: 60px 20px;
  border: 2px solid #222;
}

.title {
  margin: 0;
  font-size: 61px;
  font-weight: 400;
  line-height: 80px;
  text-align: center;
}

.search {
  width: 320px;
  max-width: 100%;
  height: 60px;
  padding: 0 30px;
  outline: 0;
  background: #f6d0cc;
  font-size: 21px;
  text-align: center;
  text-transform: uppercase;
}

.search::placeholder {
  color: #757575;
}

/* Dock */
.dock-area {
  position: relative;
  flex: none;
  display: flex;
  justify-content: center;
  padding: 2px 0 5px;
}

.dock {
  display: flex;
  gap: 10px;
  padding: 7px 7px 10px;
  border: 1px solid #6b4046;
  border-radius: 16px;
  background: #401117;
  box-shadow: 0 0 30px rgba(0, 0, 0, 0.2);
}

.app {
  position: relative;
  width: 36px;
  height: 36px;
}

.app svg {
  width: 100%;
  height: 100%;
}

.running::after {
  content: "";
  position: absolute;
  left: 16px;
  bottom: -9px;
  width: 4px;
  height: 4px;
  border-radius: 50%;
  background: #c98f95;
}

.badge {
  position: absolute;
  top: -4px;
  right: -5px;
  width: 17px;
  height: 17px;
  border-radius: 50%;
  background: #f5090f;
  color: #fff;
  font-size: 10px;
  line-height: 17px;
}

.wordmark {
  position: absolute;
  top: 10px;
  left: 0;
  width: 100%;
  color: #fff;
  font-size: 11px;
  font-weight: 500;
  line-height: 14px;
  text-align: center;
}

.divider {
  width: 1px;
  height: 40px;
  margin: -2px 5px;
  background: #74484e;
}
```
